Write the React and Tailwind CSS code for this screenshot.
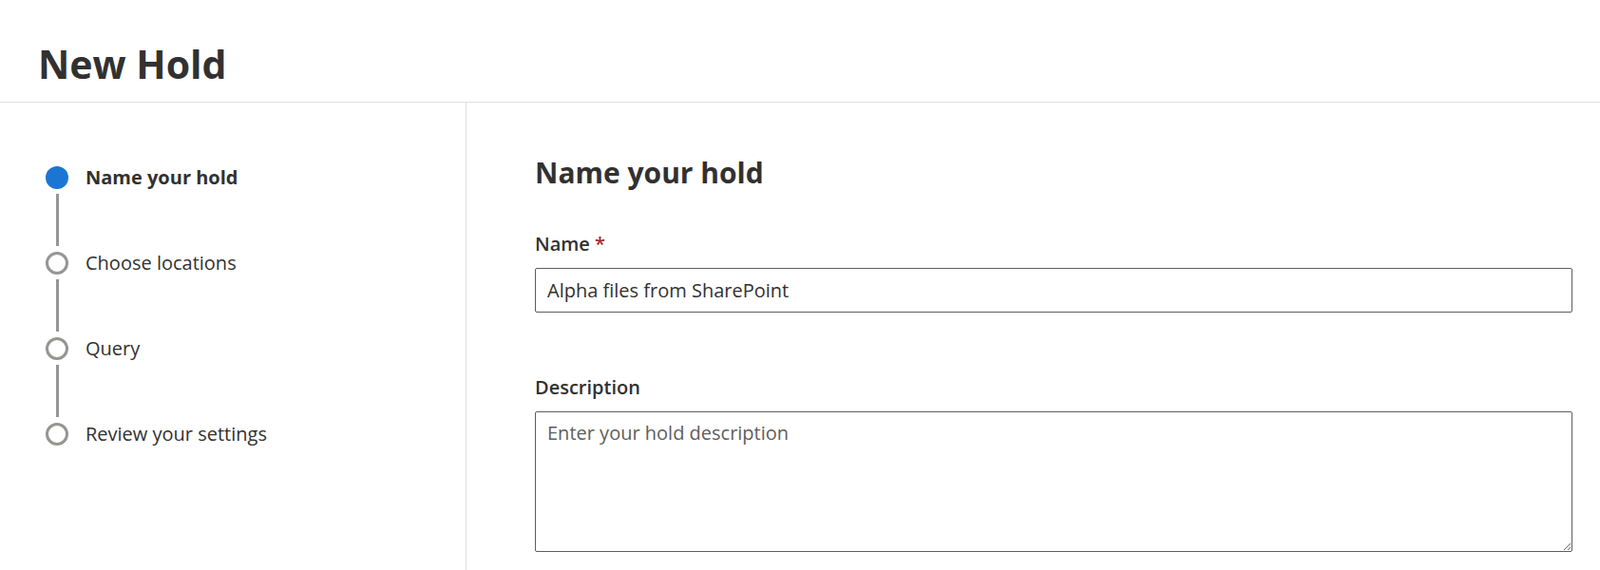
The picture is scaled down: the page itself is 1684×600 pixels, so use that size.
import React from 'react';

const steps = [
  { label: 'Name your hold', active: true },
  { label: 'Choose locations' },
  { label: 'Query' },
  { label: 'Review your settings' },
];

function Step({ label, active, last }) {
  return (
    <div className="flex flex-col">
      <div className="flex items-center">
        {active ? (
          <div className="w-[24px] h-[24px] rounded-full bg-[#1b76d3] shrink-0" />
        ) : (
          <div className="w-[24px] h-[24px] rounded-full border-[3px] border-[#979593] bg-white shrink-0" />
        )}
        <span className={`ml-[18px] text-[20px] leading-[24px] text-[#323130] ${active ? 'font-bold' : 'font-normal'}`}>
          {label}
        </span>
      </div>
      {!last && (
        <div className="w-[24px] flex justify-center pt-[5px] pb-[6px]">
          <div className="w-[3px] h-[55px] bg-[#979593]" />
        </div>
      )}
    </div>
  );
}

export default function App() {
  return (
    <div className="h-[600px] bg-white flex flex-col text-[#323130] overflow-hidden" style={{ fontFamily: '"Open Sans", "Noto Sans", sans-serif' }}>
      {/* Header */}
      <div className="h-[108px] shrink-0 border-b border-[#e1dfdd] pl-[40px] pt-[39px]">
        <h1 className="text-[41px] leading-[56px] font-bold">New Hold</h1>
      </div>

      <div className="flex flex-1 min-h-0">
        {/* Wizard steps */}
        <div className="w-[491px] shrink-0 border-r border-[#e1dfdd] pl-[48px] pt-[67px]">
          {steps.map((s, i) => (
            <Step key={s.label} {...s} last={i === steps.length - 1} />
          ))}
        </div>

        {/* Form */}
        <div className="flex-1 pl-[72px] pr-[29px] pt-[54px]">
          <h2 className="text-[30px] leading-[40px] font-bold">Name your hold</h2>

          <label className="block mt-[41px] text-[20px] leading-[28px] font-semibold">
            Name <span className="text-[#a4262c]">*</span>
          </label>
          <input
            readOnly
            value="Alpha files from SharePoint"
            className="mt-[11px] block w-full h-[47px] border border-[#605e5c] rounded-[2px] px-[12px] text-[20px] text-[#323130] outline-none"
          />

          <label className="block mt-[65px] text-[20px] leading-[28px] font-semibold">Description</label>
          <textarea
            placeholder="Enter your hold description"
            className="mt-[11px] block w-full h-[148px] border border-[#605e5c] rounded-[2px] px-[12px] pt-[8px] text-[20px] leading-[28px] text-[#323130] placeholder:text-[#605e5c] outline-none"
          />
        </div>
      </div>
    </div>
  );
}
